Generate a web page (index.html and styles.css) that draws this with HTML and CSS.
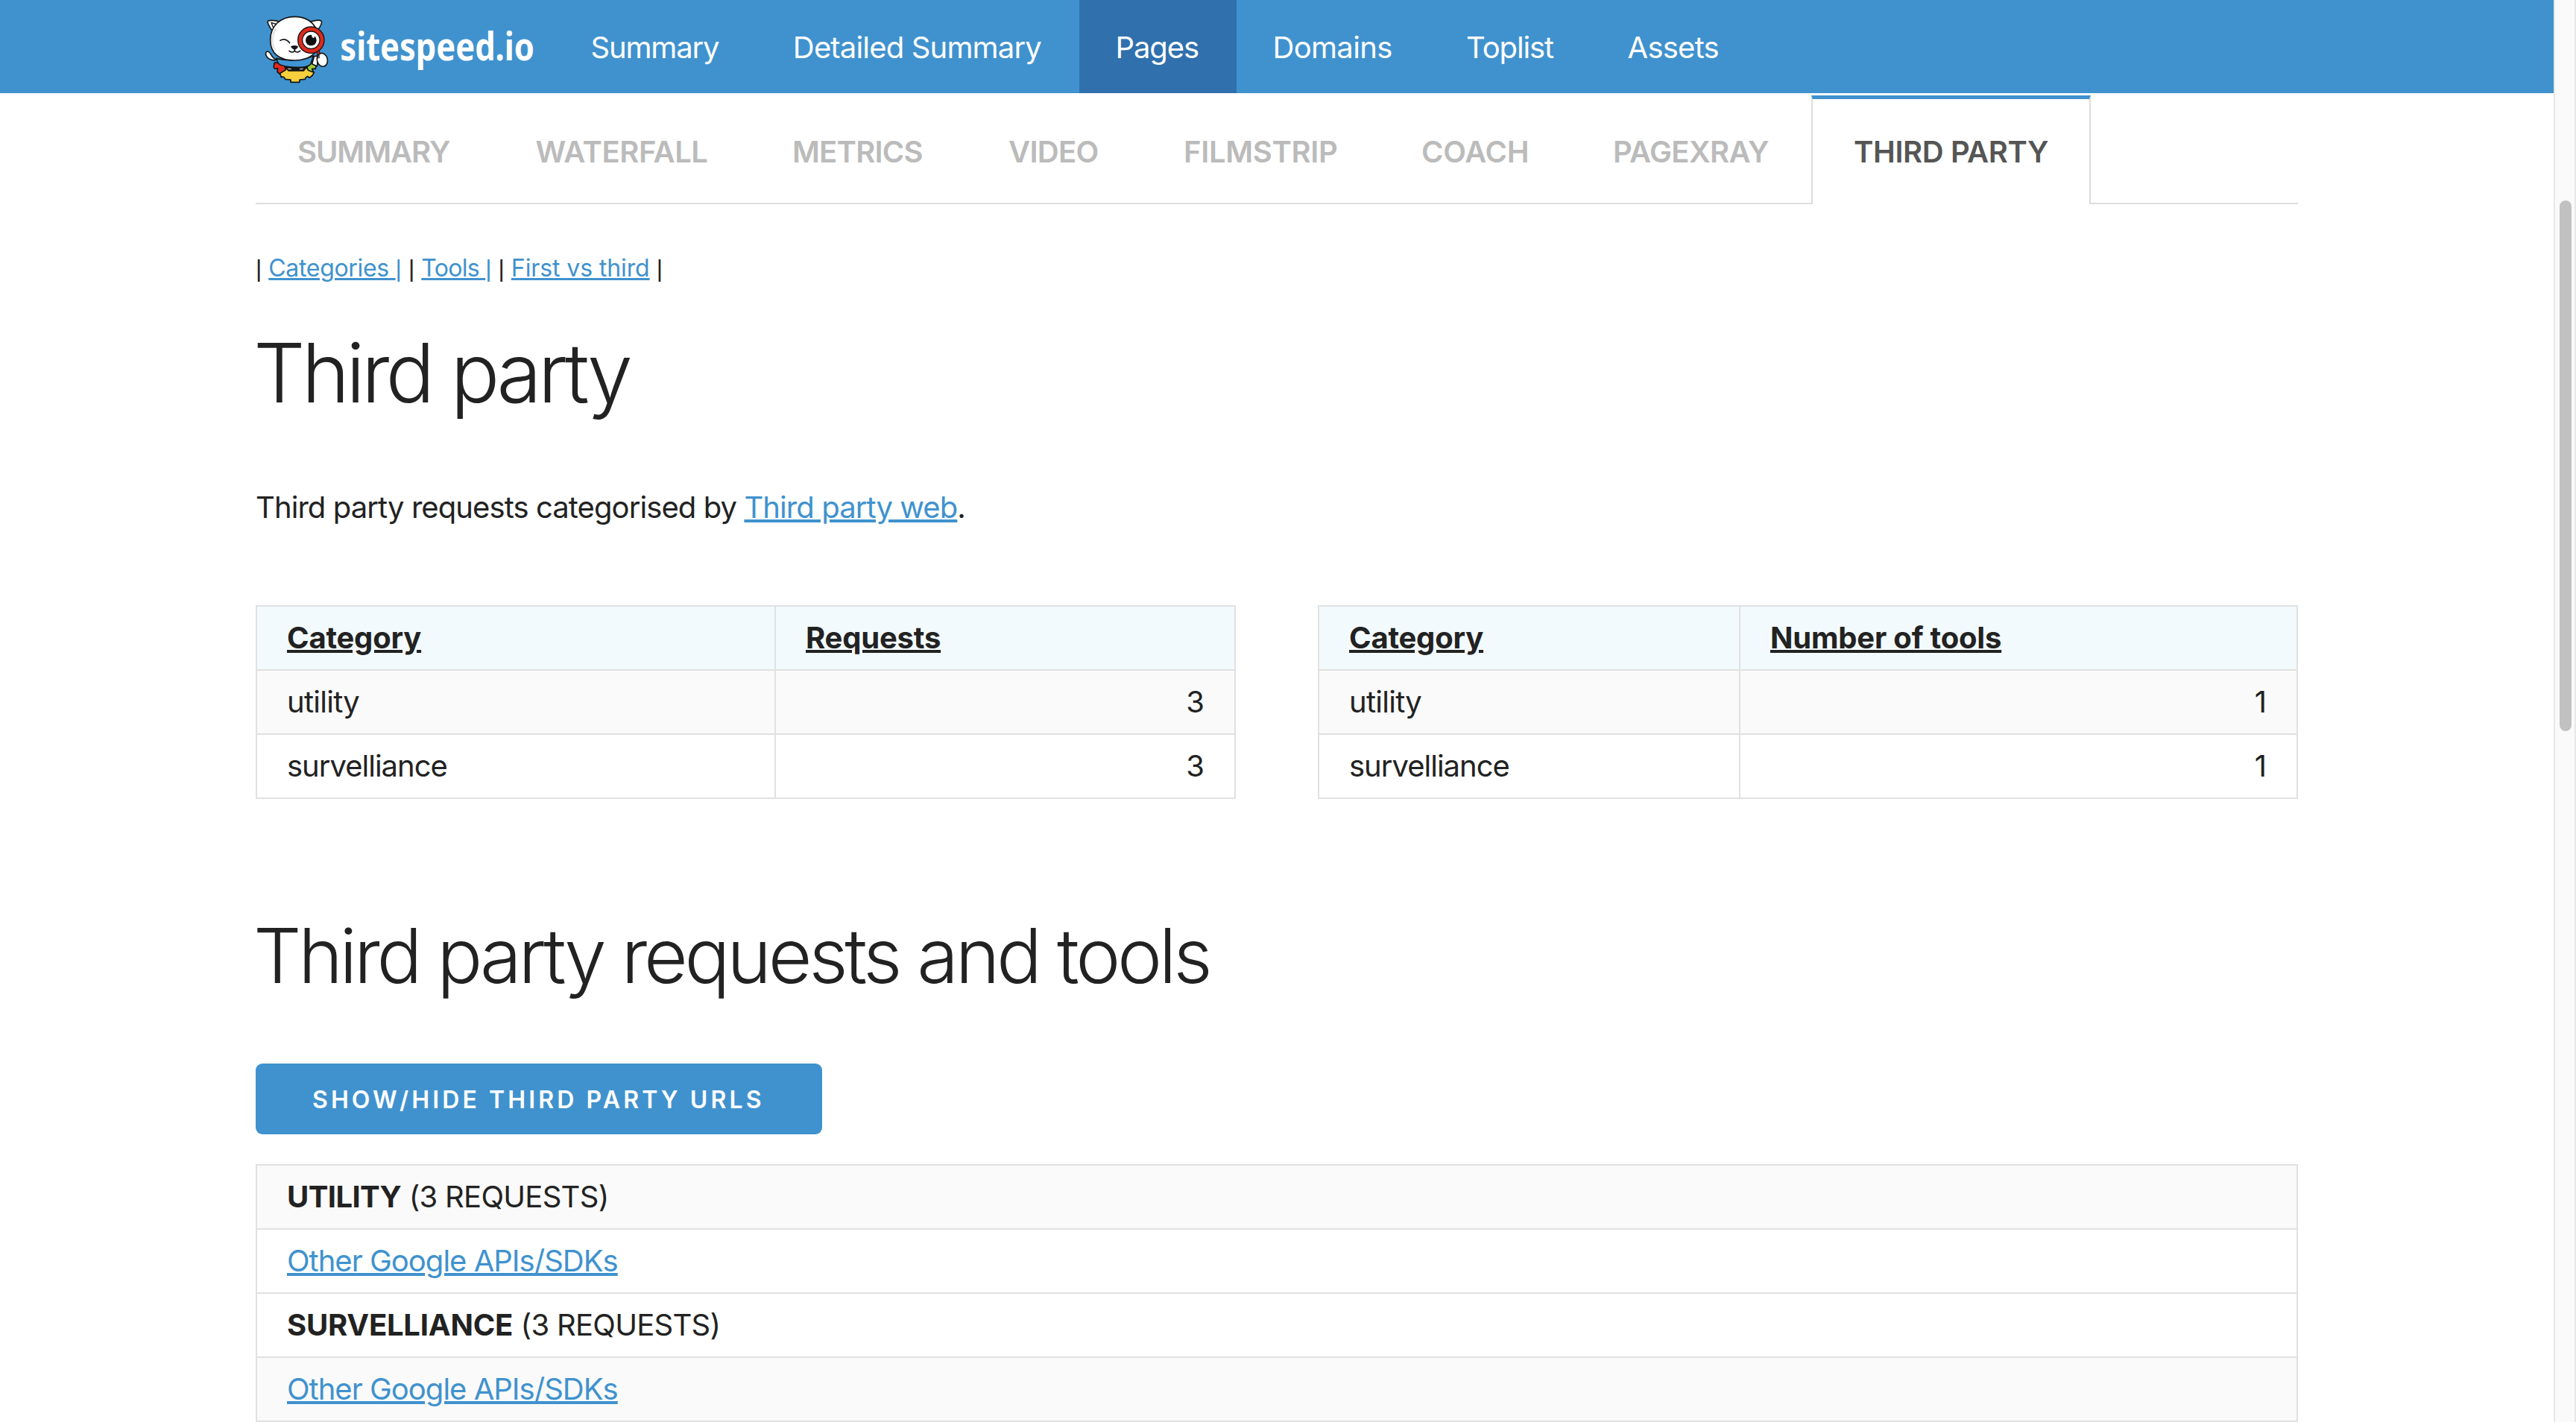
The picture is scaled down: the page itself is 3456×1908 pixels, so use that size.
FILE: index.html
```html
<!DOCTYPE html>
<html lang="en">
<head>
<meta charset="utf-8">
<title>Third party - sitespeed.io</title>
<link rel="stylesheet" href="styles.css">
</head>
<body>
<div class="page">
  <header class="topbar">
    <svg class="logo" viewBox="0 0 1110 300" role="img" aria-label="sitespeed.io">
      <g stroke="#151515" stroke-width="5" stroke-linejoin="round" stroke-linecap="round">
        <!-- gear -->
        <path fill="#f5cf3c" d="M74 240L100 228L182 228L214 246L208 258L196 268L188 262L180 268L178 274L156 276V286H120V276L98 274Q92 260 82 266Z"/>
        <path fill="#e0291d" d="M54 208L92 204L100 236L74 252L66 244L68 230Q50 236 52 222Z"/>
        <path fill="#9ccb3b" d="M186 226L200 200L222 220L220 232L206 232L212 246L190 238Z"/>
        <path fill="#151515" d="M96 224L184 224L172 240L112 240Z"/>
        <path fill="#ddd" stroke-width="3" d="M108 228L124 230L122 237L108 234ZM156 230L172 228L170 235L156 237Z"/>
        <!-- tail, collar and paw -->
        <path fill="#fff" d="M62 196C40 188 40 160 26 162C12 166 22 192 44 196Q54 200 64 194Z"/>
        <path fill="#3f94d4" d="M62 190Q136 208 212 180L200 214Q184 228 140 226Q84 224 70 210Z"/>
        <path fill="#fff" d="M214 182L206 212L226 222L232 180Z"/>
        <!-- ears and head -->
        <path fill="#fff" d="M48 82C30 58 22 38 32 38C46 36 66 38 78 44Z"/>
        <path fill="#fff" d="M194 44C212 38 236 34 244 40C248 50 238 64 228 78Z"/>
        <path fill="#fff" stroke-width="4" d="M42 46L66 54L52 72Z"/>
        <path fill="#fff" d="M137 22C196 22 232 60 232 118C232 170 196 198 136 198C74 198 38 170 38 116C38 60 78 22 137 22Z"/>
      </g>
      <path fill="none" stroke="#e2e4e6" stroke-width="8" d="M60 70Q34 118 58 158"/>
      <g fill="none" stroke="#151515" stroke-width="5" stroke-linecap="round">
        <path d="M78 118Q98 106 116 128"/>
        <path d="M136 152V160M114 160Q128 170 136 160Q144 170 158 160"/>
      </g>
      <path fill="#151515" d="M120 142Q136 134 150 142Q148 152 136 155Q124 152 120 142Z"/>
      <!-- magnifier -->
      <path stroke="#151515" stroke-width="14" stroke-linecap="round" d="M230 162L238 196"/>
      <path stroke="#e0291d" stroke-width="8" stroke-linecap="round" d="M228 158L237 184"/>
      <circle cx="202" cy="116" r="44" fill="#fff" stroke="#151515" stroke-width="22"/>
      <circle cx="202" cy="116" r="44" fill="none" stroke="#e0291d" stroke-width="14"/>
      <circle cx="202" cy="117" r="22" fill="#101010"/>
      <path fill="#fff" d="M204 92L218 96L214 108Q204 108 204 92Z"/>
      <ellipse cx="247" cy="196" rx="21" ry="27" transform="rotate(-14 247 196)" fill="#fff" stroke="#151515" stroke-width="5"/>
      <path d="M228 182V190M234 176V188" stroke="#151515" stroke-width="4" stroke-linecap="round"/>
      <text class="wordmark" x="319" y="199" textLength="782" lengthAdjust="spacingAndGlyphs">sitespeed.io</text>
    </svg>
    <nav class="nav">
      <a class="nav-item nav-summary">Summary</a>
      <a class="nav-item nav-detailed">Detailed Summary</a>
      <a class="nav-item nav-pages is-active">Pages</a>
      <a class="nav-item nav-domains">Domains</a>
      <a class="nav-item nav-toplist">Toplist</a>
      <a class="nav-item nav-assets">Assets</a>
    </nav>
  </header>

  <main class="container">
    <ul class="tabs">
      <li class="tab tab-summary">SUMMARY</li>
      <li class="tab tab-waterfall">WATERFALL</li>
      <li class="tab tab-metrics">METRICS</li>
      <li class="tab tab-video">VIDEO</li>
      <li class="tab tab-filmstrip">FILMSTRIP</li>
      <li class="tab tab-coach">COACH</li>
      <li class="tab tab-pagexray">PAGEXRAY</li>
      <li class="tab tab-third is-active">THIRD PARTY</li>
    </ul>

    <div class="jump"><span class="bar">|</span> <a class="link jump-categories">Categories <span class="bar">|</span></a> <span class="bar">|</span> <a class="link jump-tools">Tools <span class="bar">|</span></a> <span class="bar">|</span> <a class="link jump-first">First vs third</a> <span class="bar">|</span></div>

    <h1 class="title">Third party</h1>
    <p class="intro">Third party requests categorised by <a class="link">Third party web</a>.</p>

    <div class="pair">
      <table class="grid grid-requests">
        <thead><tr><th class="first">Category</th><th>Requests</th></tr></thead>
        <tbody>
          <tr class="odd"><td>utility</td><td class="num">3</td></tr>
          <tr><td class="long">survelliance</td><td class="num">3</td></tr>
        </tbody>
      </table>
      <table class="grid grid-tools">
        <thead><tr><th class="first">Category</th><th>Number of tools</th></tr></thead>
        <tbody>
          <tr class="odd"><td>utility</td><td class="num">1</td></tr>
          <tr><td class="long">survelliance</td><td class="num">1</td></tr>
        </tbody>
      </table>
    </div>

    <h2 class="subtitle">Third party requests and tools</h2>
    <button class="button" type="button">SHOW/HIDE THIRD PARTY URLS</button>

    <table class="grid grid-urls">
      <tbody>
        <tr class="odd"><td><b class="utility">UTILITY</b> (3 REQUESTS)</td></tr>
        <tr><td class="tool"><a class="link">Other Google APIs/SDKs</a></td></tr>
        <tr><td><b>SURVELLIANCE</b> (3 REQUESTS)</td></tr>
        <tr class="odd"><td class="tool"><a class="link">Other Google APIs/SDKs</a></td></tr>
      </tbody>
    </table>
  </main>

  <div class="scrollbar"><div class="thumb"></div></div>
</div>
</body>
</html>
```
FILE: styles.css
```css
* { box-sizing: border-box; }

body {
  margin: 0;
  background: #fff;
  color: #222;
  font: 400 40px/64px Inter, "Liberation Sans", sans-serif;
}

.page {
  display: grid;
  grid-template-columns: 3426px 30px;
  grid-template-rows: 125px 1fr;
  height: 1908px;
  overflow: hidden;
}

/* Top bar */
.topbar {
  display: flex;
  background: #4092ce;
  color: #fff;
}
.logo {
  flex: none;
  width: 370px;
  height: 100px;
  margin: 15px 24px 0 350px;
  overflow: visible;
}
.wordmark {
  font: 700 154px "Noto Sans", sans-serif;
  fill: #fff;
}
.nav { display: flex; }
.nav-item {
  padding: 2px 51px 0 48.5px;
  line-height: 123px;
  white-space: nowrap;
}
.nav-item.is-active { background: #2f70ad; }
.nav-summary { letter-spacing: -1.17px; }
.nav-detailed { letter-spacing: -0.83px; }
.nav-pages { letter-spacing: -1.1px; }
.nav-domains { letter-spacing: -0.66px; }
.nav-toplist { letter-spacing: -1.11px; }
.nav-assets { letter-spacing: -0.77px; }

.container {
  grid-column: 1;
  width: 2740px;
  margin: 0 0 0 343px;
}

/* Tabs */
.tabs {
  display: flex;
  align-items: flex-start;
  height: 146px;
  margin: 3px 0 62px;
  padding: 0;
  border-bottom: 2px solid #ddd;
  list-style: none;
  font-weight: 600;
  color: #bbb;
}
.tab {
  flex: none;
  height: 144px;
  padding-left: 54px;
  border: 2px solid transparent;
  border-width: 5px 2px 0;
  line-height: 141px;
  white-space: nowrap;
}
.tab.is-active {
  height: 146px;
  background: #fff;
  border-color: #4092ce #ddd;
  color: #555;
}
.tab-summary { width: 319.5px; letter-spacing: -1.06px; }
.tab-waterfall { width: 344.5px; letter-spacing: -0.4px; }
.tab-metrics { width: 291px; letter-spacing: -0.78px; }
.tab-video { width: 234px; padding-left: 53px; letter-spacing: -0.7px; }
.tab-filmstrip { width: 319px; letter-spacing: -0.34px; }
.tab-coach { width: 257px; letter-spacing: -0.2px; }
.tab-pagexray { width: 322px; letter-spacing: -0.6px; }
.tab-third { width: 375px; padding-left: 55px; letter-spacing: -0.41px; }

/* Text */
.link {
  color: #4092ce;
  text-decoration: underline;
  text-decoration-thickness: 4px;
  text-underline-offset: 2px;
}
.jump {
  font-size: 32px;
  line-height: 48px;
}
.jump .link { text-decoration-thickness: 3px; }
.bar {
  font-family: "Liberation Sans", sans-serif;
  letter-spacing: 0;
}
.jump-categories { letter-spacing: -0.32px; }
.jump-tools { letter-spacing: -0.7px; }
.jump-first { letter-spacing: -0.1px; }
.title {
  margin: 50px 0 83px -3px;
  font-size: 109.5px;
  font-weight: 300;
  line-height: 132px;
  letter-spacing: -4.9px;
}
.intro {
  margin: 0 0 99px;
  letter-spacing: -0.92px;
}
.subtitle {
  margin: 150px 0 85px -3px;
  font-size: 101.5px;
  font-weight: 300;
  line-height: 120px;
  letter-spacing: -4.35px;
}
.button {
  display: block;
  width: 760px;
  height: 95px;
  margin: 0 0 40px;
  padding: 3px 0 0 76px;
  border: 0;
  border-radius: 9px;
  background: #4092ce;
  color: #fff;
  font: 600 32px/92px Inter, sans-serif;
  letter-spacing: 4.1px;
  text-align: left;
}

/* Tables */
.pair {
  display: grid;
  grid-template-columns: 1315px 1315px;
  column-gap: 110px;
}
.grid {
  width: 100%;
  table-layout: fixed;
  border-collapse: collapse;
  letter-spacing: -0.72px;
}
.grid th,
.grid td {
  height: 86px;
  padding: 0 40px;
  border: 2px solid #e1e1e1;
  text-align: left;
}
.grid th {
  background: #f3fafd;
  font-weight: 700;
  letter-spacing: -0.2px;
  text-decoration: underline;
  text-decoration-thickness: 4px;
  text-underline-offset: 2px;
}
.grid .num { text-align: right; letter-spacing: 0; }
.grid .long,
.grid .tool { letter-spacing: -0.99px; }
.grid .odd { background: #fafafa; }
.grid b { letter-spacing: -0.23px; }
.grid .utility { letter-spacing: -0.6px; }
.grid-requests .first { width: 696px; }
.grid-tools .first { width: 565px; }

/* Scrollbar */
.scrollbar {
  grid-column: 2;
  grid-row: 1 / 3;
  padding: 269px 4px 0 6px;
  border: solid #e8e8e8;
  border-width: 0 2px;
  background: #fafafa;
}
.thumb {
  width: 16px;
  height: 712px;
  border-radius: 8px;
  background: #c1c1c1;
}
```
